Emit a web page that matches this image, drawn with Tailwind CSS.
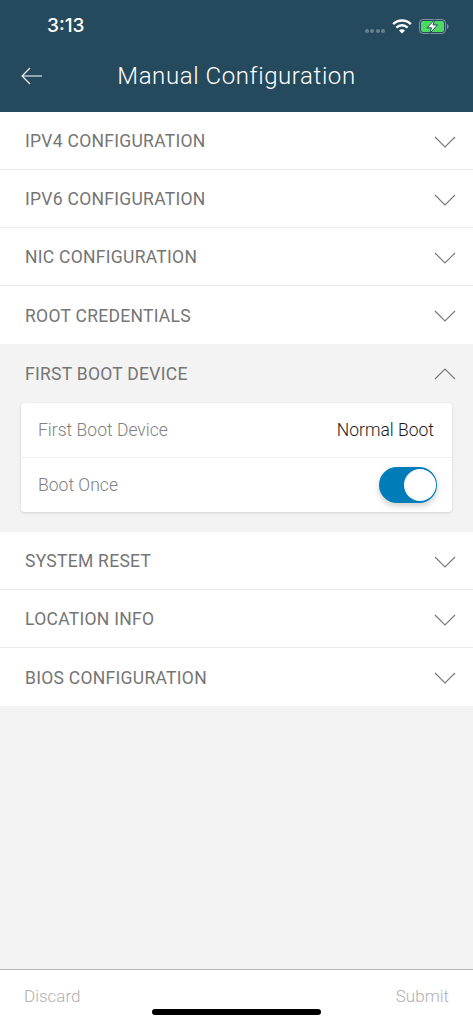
<!DOCTYPE html>
<html lang="en">
<head>
    <meta charset="UTF-8">
    <meta name="viewport" content="width=device-width, initial-scale=1.0">
    <title>Manual Configuration</title>
    <script src="https://cdn.jsdelivr.net/npm/@tailwindcss/browser@4"></script>
</head>
<body class="bg-[#f3f3f3] font-['Roboto',sans-serif]">
    <div class="relative flex h-[1024px] w-[473px] flex-col overflow-hidden">
        <!-- Header -->
        <header class="h-[112px] shrink-0 bg-[#264a5d] text-white">
            <div class="flex h-[52px] items-center justify-between pl-[47px] pr-[24px]">
                <span class="text-[19px] font-medium font-['Inter',sans-serif]">3:13</span>
                <div class="flex items-center">
                    <div class="mr-[7px] mt-[10px] flex gap-[1.500px]">
                        <span class="size-[4px] rounded-full bg-white/30"></span>
                        <span class="size-[4px] rounded-full bg-white/30"></span>
                        <span class="size-[4px] rounded-full bg-white/30"></span>
                        <span class="size-[4px] rounded-full bg-white/30"></span>
                    </div>
                    <svg class="mr-[7px]" width="20" height="15" viewBox="0 0 20 15" fill="none" stroke="white" stroke-width="2.4">
                        <path d="M1.2 5.2a12.4 12.4 0 0 1 17.6 0"/>
                        <path d="M4.4 8.6a7.9 7.9 0 0 1 11.2 0"/>
                        <path d="M10 14.6l-3-3a4.2 4.2 0 0 1 6 0z" fill="white" stroke="none"/>
                    </svg>
                    <svg width="30" height="15" viewBox="0 0 30 15" fill="none">
                        <rect x="0.5" y="0.5" width="26" height="14" rx="3.5" stroke="white" stroke-opacity="0.4"/>
                        <rect x="2" y="2" width="23" height="11" rx="2" fill="#4cd964"/>
                        <path d="M28 5v5c1-.3 1.6-1.3 1.6-2.5S29 5.300 28 5z" fill="white" fill-opacity="0.4"/>
                        <path d="M15.800 0.500L8 8.800h4.500l-1.800 5.700 7.800-8.600h-4.500z" fill="white" stroke="#264a5d" stroke-width="1"/>
                    </svg>
                </div>
            </div>
            <div class="relative flex h-[48px] items-center justify-center">
                <svg class="absolute left-[21px] top-[15px]" width="21" height="18" viewBox="0 0 21 18" fill="none" stroke="white" stroke-width="1.100">
                    <path d="M21 9H1M9 1L1 9l8 8"/>
                </svg>
                <h1 class="text-[24px] font-[290] tracking-[0.6px] text-white">Manual Configuration</h1>
            </div>
        </header>

        <!-- Sections -->
        <main class="flex-1">
            <section class="flex h-[58px] items-center justify-between border-b border-[#ececec] bg-white pl-[25px] pr-[17px] pt-[2px]">
                <span class="text-[17.500px] font-[380] tracking-[0.28px] text-[#757575]">IPV4 CONFIGURATION</span>
                <svg width="22" height="12" viewBox="0 0 22 12" fill="none" stroke="#7a7a7a" stroke-width="1.200"><path d="M1 1l10 10L21 1"/></svg>
            </section>
            <section class="flex h-[58px] items-center justify-between border-b border-[#ececec] bg-white pl-[25px] pr-[17px] pt-[2px]">
                <span class="text-[17.500px] font-[380] tracking-[0.28px] text-[#757575]">IPV6 CONFIGURATION</span>
                <svg width="22" height="12" viewBox="0 0 22 12" fill="none" stroke="#7a7a7a" stroke-width="1.200"><path d="M1 1l10 10L21 1"/></svg>
            </section>
            <section class="flex h-[58px] items-center justify-between border-b border-[#ececec] bg-white pl-[25px] pr-[17px] pt-[2px]">
                <span class="text-[17.500px] font-[380] tracking-[0.28px] text-[#757575]">NIC CONFIGURATION</span>
                <svg width="22" height="12" viewBox="0 0 22 12" fill="none" stroke="#7a7a7a" stroke-width="1.200"><path d="M1 1l10 10L21 1"/></svg>
            </section>
            <section class="flex h-[58px] items-center justify-between bg-white pl-[25px] pr-[17px] pt-[2px]">
                <span class="text-[17.500px] font-[380] tracking-[0.28px] text-[#757575]">ROOT CREDENTIALS</span>
                <svg width="22" height="12" viewBox="0 0 22 12" fill="none" stroke="#7a7a7a" stroke-width="1.200"><path d="M1 1l10 10L21 1"/></svg>
            </section>

            <!-- Expanded section -->
            <section class="h-[188px] bg-[#f3f3f3]">
                <div class="flex h-[59px] items-center justify-between pl-[25px] pr-[17px] pt-[1px]">
                    <span class="text-[17.500px] font-[380] tracking-[0.28px] text-[#757575]">FIRST BOOT DEVICE</span>
                    <svg width="22" height="12" viewBox="0 0 22 12" fill="none" stroke="#7a7a7a" stroke-width="1.200"><path d="M1 11L11 1l10 10"/></svg>
                </div>
                <div class="mx-[21px] w-[431px] rounded-[4px] bg-white shadow-[0_1px_3px_rgba(0,0,0,0.14)]">
                    <div class="flex h-[55px] items-center justify-between border-b border-[#f0f0f0] pl-[17px] pr-[18px] pt-[1px]">
                        <span class="text-[17.500px] font-[300] tracking-[0.02px] text-[#808080]">First Boot Device</span>
                        <span class="text-[17.500px] font-[350] text-[#1a1a1a]">Normal Boot</span>
                    </div>
                    <div class="flex h-[54px] items-center justify-between pl-[17px] pr-[15px]">
                        <span class="text-[17.500px] font-[300] tracking-[0.02px] text-[#808080]">Boot Once</span>
                        <div class="flex h-[36px] w-[58px] items-center justify-end rounded-full bg-[#007db8] pr-[1px] shadow-[0_3px_6px_rgba(0,0,0,0.2)]">
                            <span class="size-[32px] rounded-full bg-white"></span>
                        </div>
                    </div>
                </div>
            </section>

            <section class="flex h-[58px] items-center justify-between border-b border-[#ececec] bg-white pl-[25px] pr-[17px] pt-[2px]">
                <span class="text-[17.500px] font-[380] tracking-[0.28px] text-[#757575]">SYSTEM RESET</span>
                <svg width="22" height="12" viewBox="0 0 22 12" fill="none" stroke="#7a7a7a" stroke-width="1.200"><path d="M1 1l10 10L21 1"/></svg>
            </section>
            <section class="flex h-[58px] items-center justify-between border-b border-[#ececec] bg-white pl-[25px] pr-[17px] pt-[2px]">
                <span class="text-[17.500px] font-[380] tracking-[0.28px] text-[#757575]">LOCATION INFO</span>
                <svg width="22" height="12" viewBox="0 0 22 12" fill="none" stroke="#7a7a7a" stroke-width="1.200"><path d="M1 1l10 10L21 1"/></svg>
            </section>
            <section class="flex h-[58px] items-center justify-between bg-white pl-[25px] pr-[17px] pt-[2px]">
                <span class="text-[17.500px] font-[380] tracking-[0.28px] text-[#757575]">BIOS CONFIGURATION</span>
                <svg width="22" height="12" viewBox="0 0 22 12" fill="none" stroke="#7a7a7a" stroke-width="1.200"><path d="M1 1l10 10L21 1"/></svg>
            </section>
        </main>

        <!-- Footer -->
        <footer class="flex h-[55px] shrink-0 justify-between border-t border-[#b5b5b5] bg-white px-[24px] pt-[14px] text-[17px] font-[350] text-[#b0b0b0]">
            <span>Discard</span>
            <span>Submit</span>
        </footer>

        <!-- Home indicator -->
        <div class="absolute bottom-[9px] left-[152px] h-[6px] w-[169px] rounded-full bg-black"></div>
    </div>
</body>
</html>
